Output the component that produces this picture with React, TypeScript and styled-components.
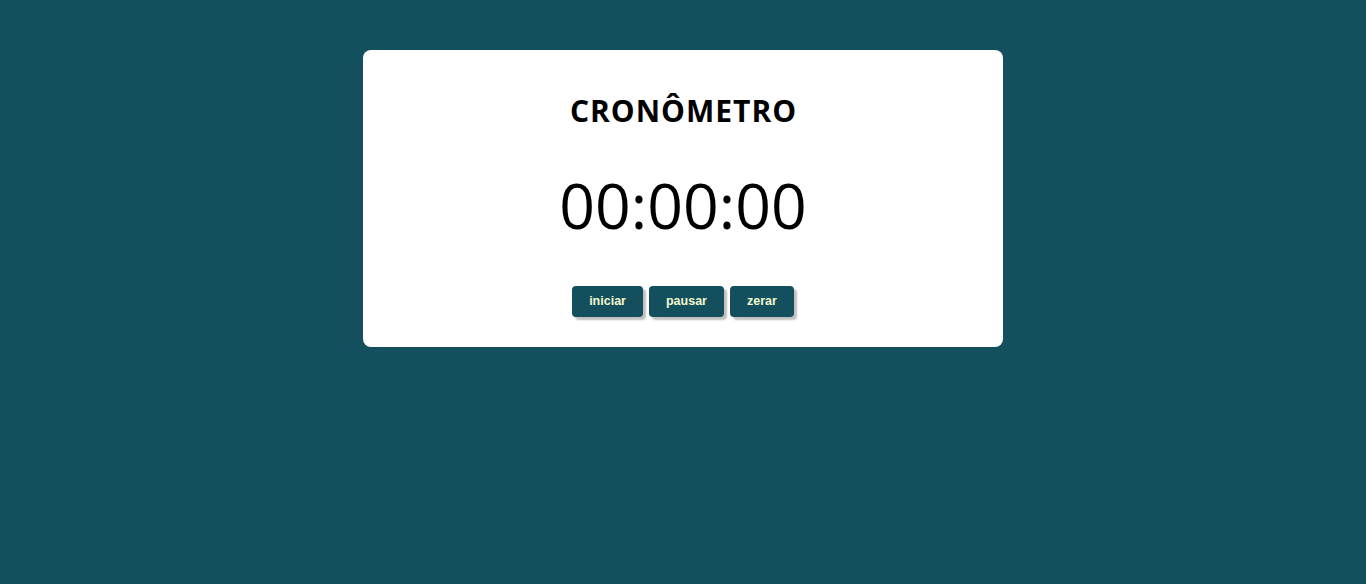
import React from "react";
import styled, { createGlobalStyle } from "styled-components";

const Global = createGlobalStyle`
  html, body { margin: 0; padding: 0; }
  body {
    background: #134f5c;
    min-height: 584px;
    font-family: "Open Sans", "Liberation Sans", sans-serif;
  }
`;

const Page = styled.div`
  display: flex;
  justify-content: center;
  padding-top: 50px;
`;

const Card = styled.div`
  width: 640px;
  height: 297px;
  box-sizing: border-box;
  background: #ffffff;
  border-radius: 8px;
  display: flex;
  flex-direction: column;
  align-items: center;
  padding-top: 46px;
`;

const Title = styled.h1`
  margin: 0 0 0 1px;
  font-family: "Open Sans", sans-serif;
  font-weight: 700;
  font-size: 30px;
  line-height: 1;
  letter-spacing: 1px;
  color: #000;
`;

const Timer = styled.div`
  margin-top: 48px;
  font-family: "Open Sans", sans-serif;
  font-weight: 400;
  font-size: 62.5px;
  line-height: 1;
  color: #000;
`;

const Buttons = styled.div`
  margin-top: 49px;
  display: flex;
  gap: 6px;
`;

const Button = styled.button`
  background: #134f5c;
  color: #f2f7cf;
  border: none;
  border-radius: 4px;
  font-family: "Liberation Sans", Arial, sans-serif;
  font-weight: 700;
  font-size: 12.5px;
  height: 31px;
  padding: 0 17px;
  box-shadow: 3px 3px 2px rgba(0, 0, 0, 0.25);
  cursor: pointer;
`;

export default function App() {
  return (
    <>
      <Global />
      <Page>
        <Card>
          <Title>CRONÔMETRO</Title>
          <Timer>00:00:00</Timer>
          <Buttons>
            <Button>iniciar</Button>
            <Button>pausar</Button>
            <Button>zerar</Button>
          </Buttons>
        </Card>
      </Page>
    </>
  );
}
